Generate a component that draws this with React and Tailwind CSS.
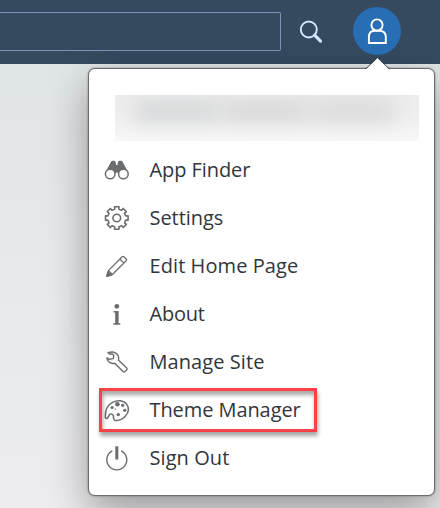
import React from "react";

const line = { fill: "none", stroke: "#6a6d70", strokeWidth: 1.5, strokeLinejoin: "round" };

function Binoculars() {
  return (
    <svg width="28" height="28" viewBox="0 0 28 28">
      <path d="M7.6 6.6 Q8.2 4.7 9.4 4.7 H11.4 Q12.4 4.7 12.7 6.2 L13.1 9 H14.5 L14.9 6.2 Q15.2 4.7 16.2 4.7 H18.2 Q19.4 4.7 20 6.6 L25 16 L21 21 L16 18.5 L15.5 16.8 H12.1 L11.6 18.5 L7 21 L2.6 16 Z" fill="#6a6d70" />
      <circle cx="7.2" cy="18" r="4.8" fill="#fff" stroke="#6a6d70" strokeWidth="1.5" />
      <circle cx="20.4" cy="18" r="4.8" fill="#fff" stroke="#6a6d70" strokeWidth="1.5" />
    </svg>
  );
}

const gearPoints = Array.from({ length: 8 }, (_, i) =>
  [[-13, 9.2], [-11, 11.5], [11, 11.5], [13, 9.2], [22.5, 9.0]].map(([offset, radius]) => {
    const angle = ((i * 45 + offset) * Math.PI) / 180;
    return `${(13.8 + radius * Math.cos(angle)).toFixed(2)},${(14 + radius * Math.sin(angle)).toFixed(2)}`;
  }).join(" ")
).join(" ");

function Gear() {
  return (
    <svg width="28" height="28" viewBox="0 0 28 28" {...line} strokeWidth="1.6">
      <polygon points={gearPoints} />
      <circle cx="13.8" cy="14" r="3.8" />
    </svg>
  );
}

function Pencil() {
  return (
    <svg width="28" height="28" viewBox="0 0 28 28" {...line} strokeWidth="1.3">
      <path d="M3.9 24 L5.4 18.6 L19.2 4.8 Q20.1 4 21 4.8 L23.2 7 Q24 7.9 23.2 8.8 L9.4 22.5 Z M5.4 18.6 L9.4 22.5 M16.9 7.2 L20.9 11.1" />
      <path d="M3.7 24.3 L4.9 19.8 L8.2 23.1 Z" fill="#6a6d70" />
    </svg>
  );
}

function Info() {
  return (
    <svg width="28" height="28" viewBox="0 0 28 28" fill="#6a6d70">
      <circle cx="13.8" cy="6.3" r="2.4" />
      <path d="M10.5 11 H15.6 V23.2 H17.3 V24.8 H10.3 V23.2 H12.2 V12.6 H10.5 Z" />
    </svg>
  );
}

function Wrench() {
  return (
    <svg width="28" height="28" viewBox="0 0 28 28" {...line} strokeWidth="1.4">
      <path d="M5 4.7 Q7.3 3.8 10 4 Q15.5 5.3 15.7 10.3 L15.4 12 L23.7 20 Q24.5 21 23.7 22 L21.9 23.6 Q21 24.3 20 23.5 L11.7 15.2 Q6.5 16.5 4.2 11.3 L4 9.7 L6 11.3 L10.2 10.6 L10.8 7.3 L9.4 6 H6.5 Z" />
    </svg>
  );
}

function Palette() {
  return (
    <svg width="28" height="28" viewBox="0 0 28 28" {...line} strokeWidth="1.5">
      <path d="M2.5 22 C1.7 14.4 4.4 9 9.6 6.3 C14.4 3.9 20.6 4.1 23.7 8.3 C26.3 12.1 25.6 16.7 22.2 20.3 C19 23.8 15 24.9 11.8 24.2 Q10.3 23.6 10.5 21.5 C10.7 18.8 8.8 17.2 6.9 18.4 C5.4 19.4 5.3 22 4 22.5 Q2.9 22.8 2.5 22 Z" />
      <g fill="#6a6d70" stroke="none">
        <circle cx="14.4" cy="8.2" r="2.3" /><circle cx="9.1" cy="11.5" r="1.6" />
        <circle cx="19.7" cy="9.3" r="1.6" /><circle cx="21.7" cy="14.3" r="1.6" />
        <circle cx="15.3" cy="18.6" r="1.7" /><circle cx="12.2" cy="13.2" r="0.7" />
      </g>
    </svg>
  );
}

function Power() {
  return (
    <svg width="28" height="28" viewBox="0 0 28 28" {...line} strokeWidth="1.4">
      <path d="M9.4 6.9 A10 10 0 1 0 18.2 6.9" />
      <path d="M13.8 2.3 V15.5" strokeWidth="3" />
    </svg>
  );
}

const items = [
  { label: "App Finder", icon: Binoculars, spacing: "tracking-[-0.08px]" },
  { label: "Settings", icon: Gear, spacing: "tracking-[-0.05px]" },
  { label: "Edit Home Page", icon: Pencil, spacing: "tracking-[0.08px]" },
  { label: "About", icon: Info, spacing: "tracking-[-0.25px]" },
  { label: "Manage Site", icon: Wrench, spacing: "tracking-[0.08px]" },
  { label: "Theme Manager", icon: Palette, spacing: "tracking-[-0.08px]", marked: true },
  { label: "Sign Out", icon: Power, spacing: "tracking-[0.08px]" },
];

function MenuItem({ label, icon: Icon, spacing, marked }) {
  return (
    <li className="relative flex h-12 items-center pl-[13.5px]">
      <Icon />
      <span className={"ml-[19px] whitespace-nowrap text-[20px] leading-6 text-[#32363a] " + spacing}>{label}</span>
      {marked && (
        <span className="absolute left-[10px] top-[2px] h-[44px] w-[218px] border-3 border-[#ff4245] shadow-[1px_4px_4px_rgba(0,0,0,0.35),inset_1px_4px_4px_rgba(0,0,0,0.35)]" />
      )}
    </li>
  );
}

export default function App() {
  return (
    <div className="relative h-[508px] w-[440px] overflow-hidden bg-linear-to-b from-[#dfe4e4] to-[#ededef] font-['Open_Sans','Noto_Sans',sans-serif]">
      <header className="flex h-16 items-start bg-[#354a5f]">
        <div className="mt-3 h-[39px] w-[281px] rounded-r-[2px] border border-l-0 border-[#7996b8]" />
        <svg className="ml-[17px] mt-[18px]" width="28" height="28" viewBox="0 0 28 28" fill="none" stroke="#d1e8ff">
          <circle cx="10.8" cy="11.5" r="8" strokeWidth="1.9" />
          <path d="M16.6 17.2 L22.5 23.1" strokeWidth="3.2" strokeLinecap="round" />
        </svg>
        <div className="ml-[27px] mt-[7px] flex size-12 items-center justify-center rounded-full bg-[#286eb4]">
          <svg width="28" height="28" viewBox="0 0 28 28" fill="none" stroke="#fff" strokeWidth="1.9">
            <circle cx="14" cy="8" r="5.6" />
            <path d="M5.9 26 V20 Q5.9 13.7 12 13.7 H16 Q22.8 13.7 22.8 20 V26 Z" />
          </svg>
        </div>
      </header>
      <div className="absolute left-[88px] top-[68px] h-[428px] w-[347px] rounded-[7px] border border-[#6a6d70] bg-white shadow-[0_16px_40px_rgba(0,0,0,0.35),0_0_2px_rgba(0,0,0,0.45)]">
        <svg className="absolute left-[276px] top-[-13px]" width="26" height="14" viewBox="0 0 26 14">
          <path d="M0 13 L2 12.4 L12.5 2 L23 12.4 L25 13 V14 H0 Z" fill="#fff" />
          <path d="M0 12.5 Q1.2 12.5 2 11.7 L12.5 1.4 L23 11.7 Q24 12.5 25 12.5" fill="none" stroke="#394654" strokeWidth="1" />
        </svg>
        <div className="ml-[26px] mt-[26px] h-[46px] w-[304px] overflow-hidden bg-linear-to-b from-[#ececec] via-[#efefef] to-[#f8f8f8]">
          <div className="ml-5 mt-1 flex gap-1 blur-[9px]">
            <div className="h-[24px] w-[84px] bg-[#d8dadb]" />
            <div className="h-[24px] w-[84px] bg-[#dadada]" />
            <div className="h-[24px] w-[84px] bg-[#dcdcdc]" />
          </div>
        </div>
        <ul className="mt-[5px]">
          {items.map((item) => <MenuItem key={item.label} {...item} />)}
        </ul>
      </div>
    </div>
  );
}
